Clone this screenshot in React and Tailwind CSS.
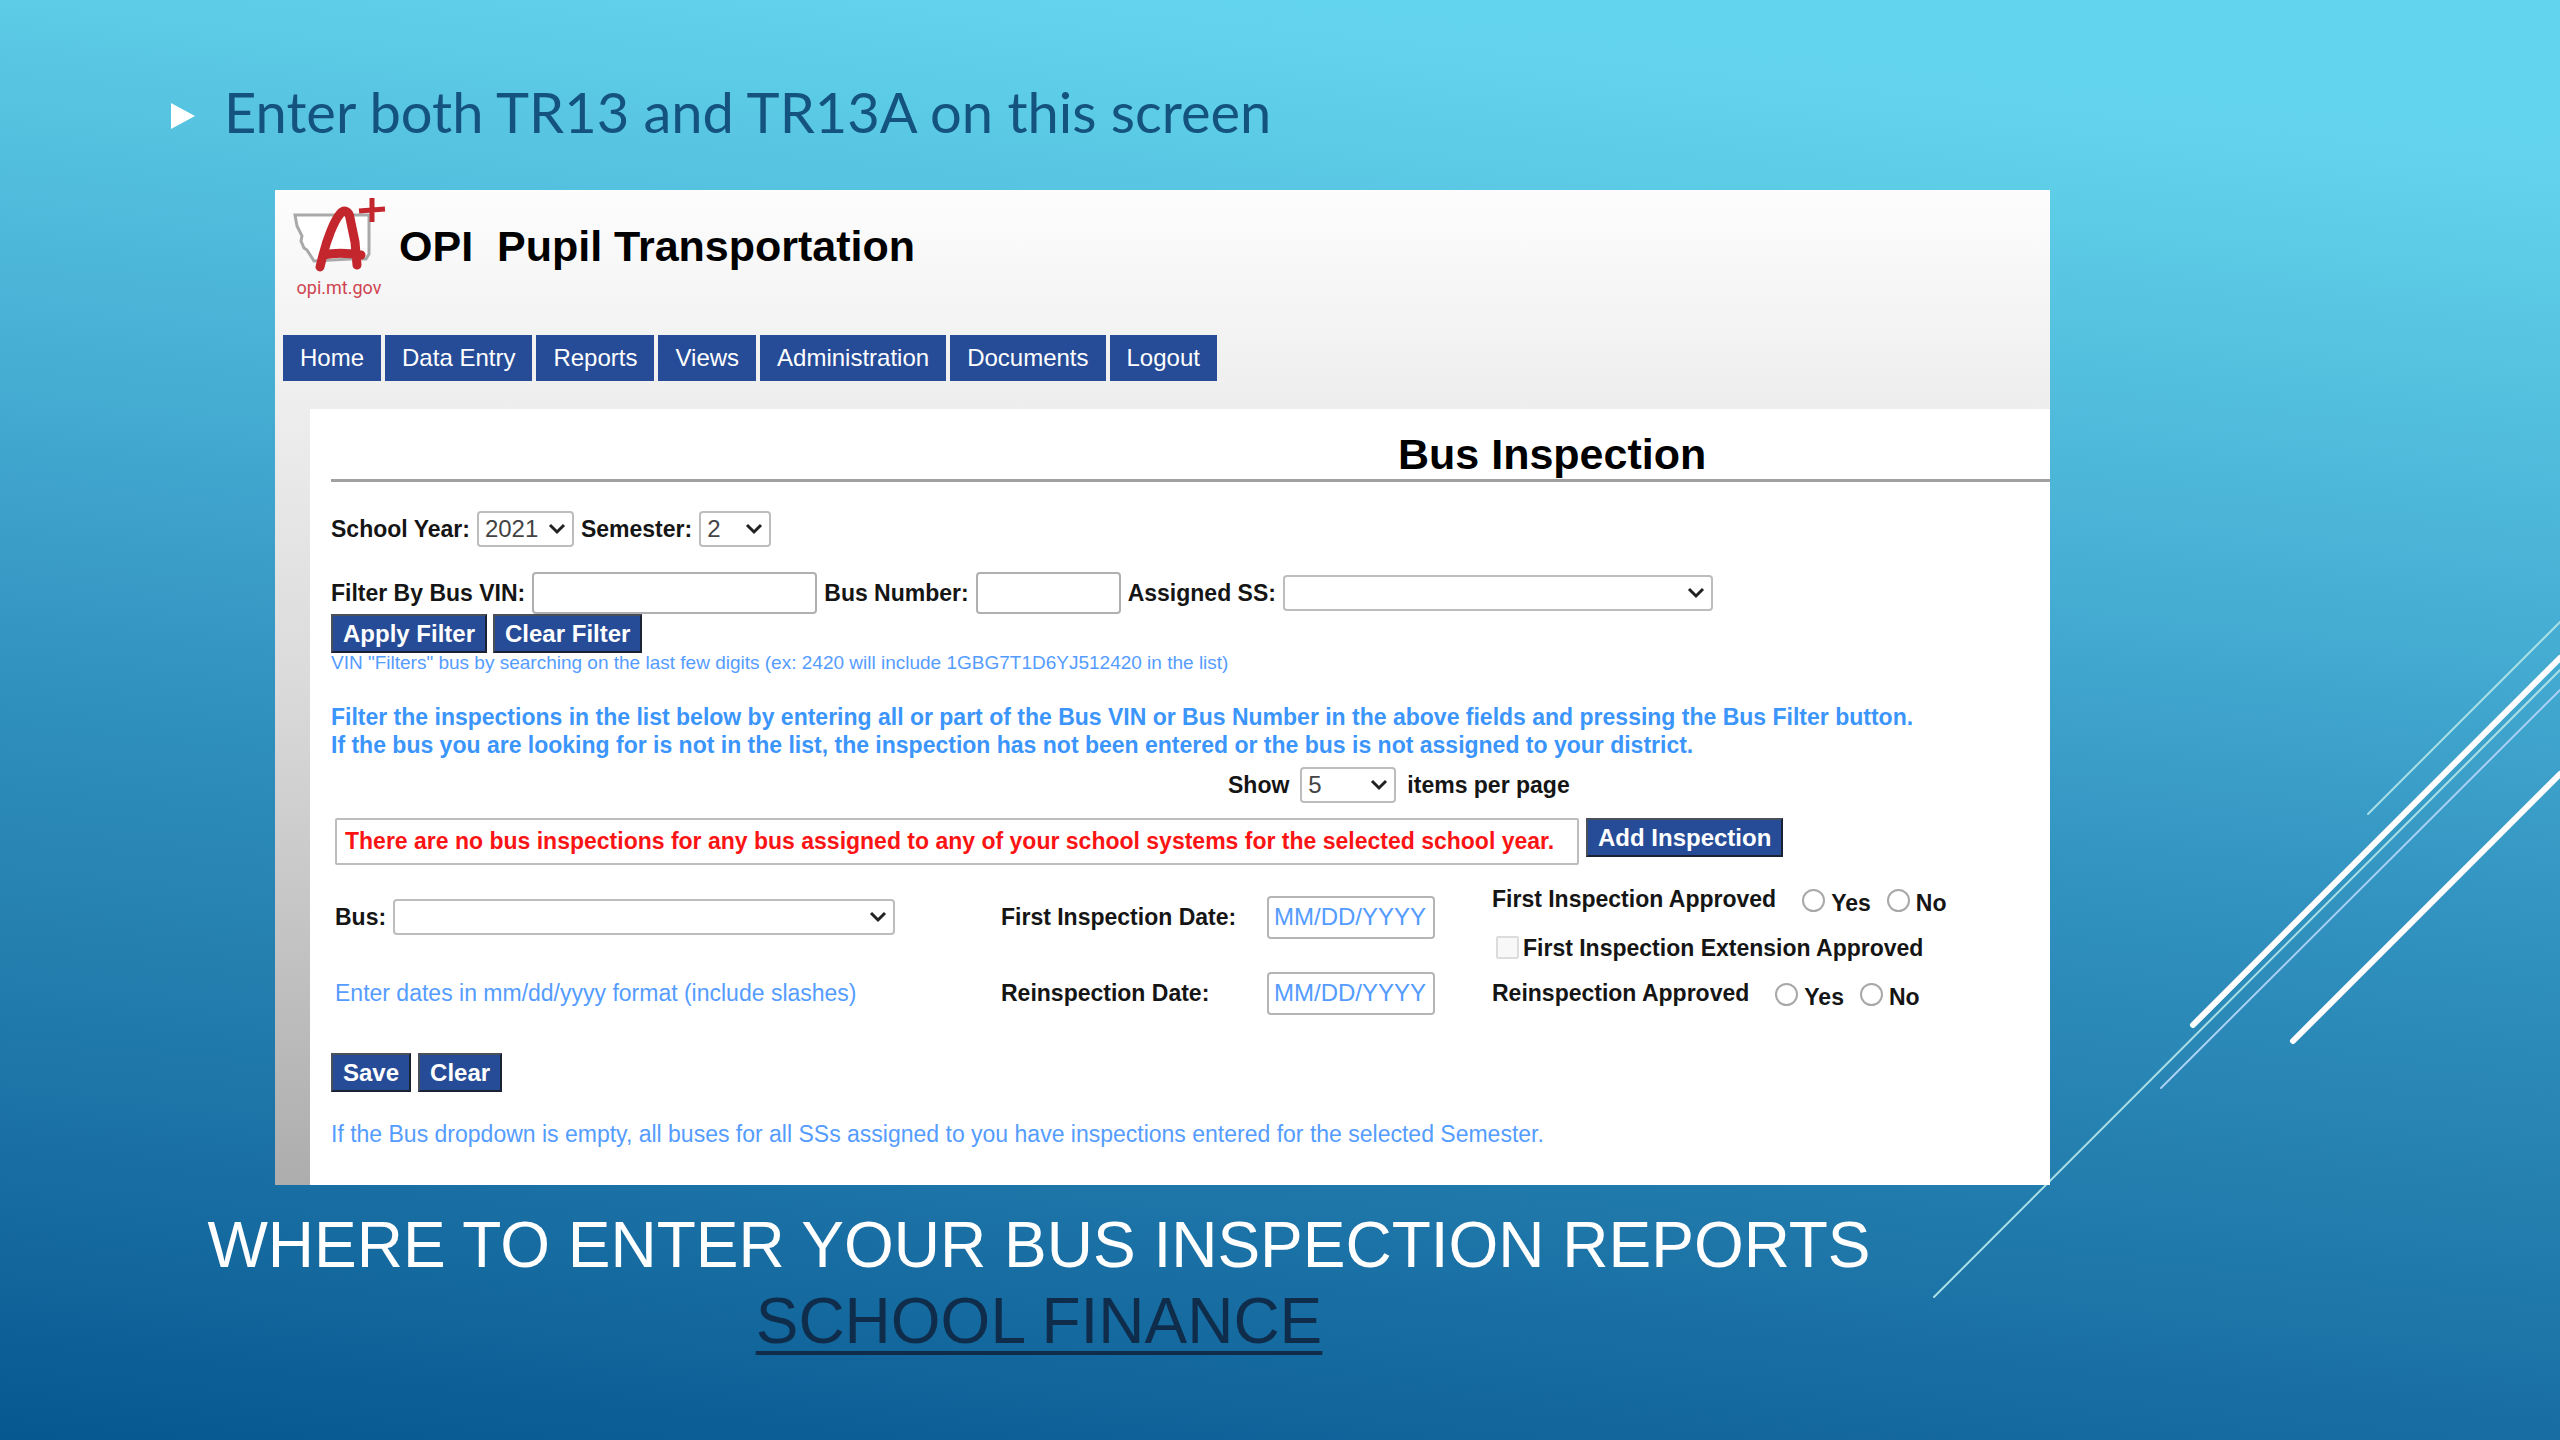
import { useState } from "react";

const menu = [
  "Home",
  "Data Entry",
  "Reports",
  "Views",
  "Administration",
  "Documents",
  "Logout",
];

function Dropdown({ id, label, options, className }) {
  return (
    <span className="relative inline-flex">
      <select
        id={id}
        aria-label={label}
        className={`h-9 appearance-none rounded-sm border-2 border-[#bdbdbd] bg-white pl-[6px] text-2xl leading-7 font-normal text-[#444] ${className}`}
      >
        {options.map((option) => (
          <option key={option}>{option}</option>
        ))}
      </select>
      <svg
        viewBox="0 0 18 12"
        className="pointer-events-none absolute top-3 right-2 h-3 w-[18px]"
      >
        <path d="M2 2l7 7 7-7" fill="none" stroke="#222" strokeWidth="3" />
      </svg>
    </span>
  );
}

function ActionButton({ children, onClick }) {
  return (
    <button
      type="button"
      onClick={onClick}
      className="h-[39px] border-2 border-t-[#4a4f5c] border-r-[#1b2233] border-b-[#1b2233] border-l-[#4a4f5c] bg-[#264c97] px-[10px] text-2xl leading-8 font-bold text-white"
    >
      {children}
    </button>
  );
}

function DateInput({ id }) {
  return (
    <input
      id={id}
      type="text"
      placeholder="MM/DD/YYYY"
      className="h-[43px] w-[168px] rounded-sm border-2 border-[#b5b5b5] bg-white px-[5px] text-2xl font-normal text-[#444] placeholder:text-[#559cff]"
    />
  );
}

function YesNo({ name, label }) {
  return (
    <div
      role="radiogroup"
      aria-labelledby={name}
      className="flex h-[47px] items-center"
    >
      <span id={name} className="mr-[26px] pb-1">
        {label}
      </span>
      {["Yes", "No"].map((answer) => (
        <label key={answer} className="mr-4 flex items-center gap-[6px]">
          <input
            type="radio"
            name={name}
            className="size-[23px] appearance-none rounded-full border-2 border-[#a8a8a8] bg-white checked:border-8 checked:border-[#264c97]"
          />
          <span className="pt-1">{answer}</span>
        </label>
      ))}
    </div>
  );
}

function Logo() {
  return (
    <svg viewBox="0 0 100 110" className="h-[110px] w-[100px]">
      <path
        d="M5 21H79V60L76 65H60L24 67L17 56L14 54L11 47L12 42L7 32Z"
        fill="#fff"
        stroke="#a9a9a9"
        strokeWidth="3"
      />
      <path
        d="M30 73L33 61C37 45 44 27 50 20C54 15 59 17 60 24L65 48L67 71M34 61C46 58 58 59 71 61"
        fill="none"
        stroke="#c4262e"
        strokeWidth="9"
        strokeLinecap="round"
        strokeLinejoin="round"
      />
      <path d="M82 4V28M69 17L95 15" stroke="#c4262e" strokeWidth="5" />
      <text
        x="49"
        y="100"
        textAnchor="middle"
        fill="#cf4450"
        fontSize="18"
        fontFamily="Roboto, 'Noto Sans', sans-serif"
      >
        opi.mt.gov
      </text>
    </svg>
  );
}

function Streaks() {
  return (
    <svg
      viewBox="0 0 660 720"
      className="absolute top-[600px] right-0 h-[720px] w-[660px]"
      fill="none"
      strokeLinecap="round"
    >
      <g stroke="#a9dfe6" strokeWidth="2">
        <path d="M468 214L660 22" />
        <path d="M34 697L660 70" />
        <path d="M261 488L660 90" stroke="#a9d0f5" />
      </g>
      <g stroke="#fff" strokeWidth="6">
        <path d="M293 425L660 58" />
        <path d="M393 441L660 174" />
      </g>
    </svg>
  );
}

export default function App() {
  const [vin, setVin] = useState("");
  const [busNumber, setBusNumber] = useState("");

  function clearFilter() {
    setVin("");
    setBusNumber("");
  }

  return (
    <main className="relative min-h-screen overflow-hidden bg-[linear-gradient(186deg,#63d4ee_0%,#62d2ed_10%,#5ccbe6_16%,#45acd2_38%,#3090be_56%,#2580b0_70%,#196fa4_83%,#065890_100%)] pt-[72px] font-['Liberation_Sans',Arial,sans-serif]">
      <Streaks />
      <ul className="relative pl-[171px]">
        <li className="flex items-center gap-[29px] text-[56px] leading-[80px] text-[#14527f]">
          <svg viewBox="0 0 24 26" className="mt-2 h-[26px] w-6">
            <path d="M0 0L24 13L0 26Z" fill="#fff" />
          </svg>
          <span className="font-['Century_Gothic','URW_Gothic',Lato,sans-serif]">
            Enter both TR13 and TR13A on this screen
          </span>
        </li>
      </ul>

      <section className="relative mt-[38px] mr-[510px] ml-[275px] bg-linear-to-b from-[#fdfdfd] via-[#dadada] to-[#adadad]">
        <header className="flex h-[145px] items-start gap-[9px] pt-1 pl-[15px]">
          <Logo />
          <h2 className="pt-[27px] text-[43px] leading-[50px] font-bold whitespace-pre text-black">
            OPI{"  "}Pupil Transportation
          </h2>
        </header>
        <nav className="flex gap-1 pl-2">
          {menu.map((item) => (
            <a
              key={item}
              href="#"
              className="bg-[#264c97] px-[17px] text-[24px] leading-[46px] text-white"
            >
              {item}
            </a>
          ))}
        </nav>

        <form className="mt-7 ml-[35px] overflow-hidden bg-white pt-5 pb-[37px] pl-[21px] text-[23px] leading-7 font-bold whitespace-nowrap text-[#151515]">
          <h1 className="border-b-[3px] border-[#a0a0a0] pl-[1067px] text-[43px] leading-[50px] text-black">
            Bus Inspection
          </h1>

          <div className="mt-[29px] flex h-9 items-center gap-[7px]">
            <label htmlFor="year">School Year:</label>
            <Dropdown id="year" options={["2021"]} className="w-[97px]" />
            <label htmlFor="semester">Semester:</label>
            <Dropdown id="semester" options={["2"]} className="w-[72px]" />
          </div>

          <div className="mt-[25px] flex h-[42px] items-center gap-[7px]">
            <label htmlFor="vin">Filter By Bus VIN:</label>
            <input
              id="vin"
              type="text"
              value={vin}
              onChange={(event) => setVin(event.target.value)}
              className="h-[42px] w-[285px] rounded-sm border-2 border-[#b0b0b0] bg-white px-2 font-normal"
            />
            <label htmlFor="number">Bus Number:</label>
            <input
              id="number"
              type="text"
              value={busNumber}
              onChange={(event) => setBusNumber(event.target.value)}
              className="h-[42px] w-[145px] rounded-sm border-2 border-[#b0b0b0] bg-white px-2 font-normal"
            />
            <label htmlFor="assigned">Assigned SS:</label>
            <Dropdown id="assigned" options={[""]} className="w-[430px]" />
          </div>
          <div className="flex gap-[6px]">
            <ActionButton>Apply Filter</ActionButton>
            <ActionButton onClick={clearFilter}>Clear Filter</ActionButton>
          </div>
          <p className="text-[19px] leading-5 font-normal text-[#559cff]">
            VIN "Filters" bus by searching on the last few digits (ex: 2420 will
            include 1GBG7T1D6YJ512420 in the list)
          </p>

          <p className="mt-[30px] text-[#3b95fb]">
            Filter the inspections in the list below by entering all or part of
            the Bus VIN or Bus Number in the above fields and pressing the Bus
            Filter button.
            <br />
            If the bus you are looking for is not in the list, the inspection
            has not been entered or the bus is not assigned to your district.
          </p>
          <div className="mt-2 flex items-center gap-[11px] pl-[897px]">
            <span>Show</span>
            <Dropdown label="Items per page" options={["5"]} className="w-24" />
            <span>items per page</span>
          </div>

          <div className="mt-[15px] flex items-start gap-[7px] pl-1">
            <p className="w-[1244px] rounded-xs border-2 border-[#bdbdbd] pl-2 leading-[43px] text-[#fa1414]">
              There are no bus inspections for any bus assigned to any of your
              school systems for the selected school year.
            </p>
            <ActionButton>Add Inspection</ActionButton>
          </div>

          <div className="mt-3 flex pl-1">
            <div className="w-[666px] pt-[2px]">
              <div className="flex h-[76px] items-center gap-[7px]">
                <label htmlFor="bus">Bus:</label>
                <Dropdown id="bus" options={[""]} className="w-[502px]" />
              </div>
              <p className="leading-[76px] font-normal text-[#559cff]">
                Enter dates in mm/dd/yyyy format (include slashes)
              </p>
            </div>
            <div className="w-[491px] pt-[2px]">
              <div className="flex h-[76px] items-center">
                <label htmlFor="first" className="w-[266px]">
                  First Inspection Date:
                </label>
                <DateInput id="first" />
              </div>
              <div className="flex h-[76px] items-center">
                <label htmlFor="again" className="w-[266px]">
                  Reinspection Date:
                </label>
                <DateInput id="again" />
              </div>
            </div>
            <div>
              <YesNo name="firstApproved" label="First Inspection Approved" />
              <label className="flex h-[47px] items-center gap-1 pl-1">
                <input
                  type="checkbox"
                  disabled
                  className="size-[23px] appearance-none rounded-xs border-2 border-[#dcdcdc] bg-[#f8f8f8]"
                />
                First Inspection Extension Approved
              </label>
              <YesNo name="againApproved" label="Reinspection Approved" />
            </div>
          </div>

          <div className="mt-[22px] flex gap-[7px]">
            <ActionButton>Save</ActionButton>
            <ActionButton>Clear</ActionButton>
          </div>
          <p className="mt-7 font-normal text-[#559cff]">
            If the Bus dropdown is empty, all buses for all SSs assigned to you
            have inspections entered for the selected Semester.
          </p>
        </form>
      </section>

      <h2 className="relative mt-[22px] mr-[482px] text-center text-[64px] leading-[76px] text-white">
        WHERE TO ENTER YOUR BUS INSPECTION REPORTS
        <br />
        <a
          href="#"
          className="text-[#0f2d4b] underline decoration-4 underline-offset-8"
        >
          SCHOOL FINANCE
        </a>
      </h2>
    </main>
  );
}
